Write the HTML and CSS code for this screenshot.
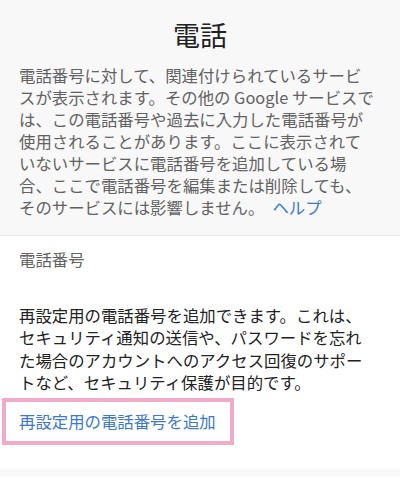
FILE: index.html
```html
<!DOCTYPE html>
<html lang="ja">
<head>
<meta charset="utf-8">
<link rel="stylesheet" href="styles.css">
</head>
<body>
<section class="intro">
  <h1 class="title">電話</h1>
  <p class="desc">電話番号に対して、関連付けられているサービスが表示されます。その他の Google サービスでは、この電話番号や過去に入力した電話番号が使用されることがあります。ここに表示されていないサービスに電話番号を追加している場合、ここで電話番号を編集または削除しても、そのサービスには影響しません。<a class="link" href="#">ヘルプ</a></p>
</section>
<section class="phone">
  <div class="label">電話番号</div>
  <p class="body">再設定用の電話番号を追加できます。これは、セキュリティ通知の送信や、パスワードを忘れた場合のアカウントへのアクセス回復のサポートなど、セキュリティ保護が目的です。</p>
  <a class="add" href="#">再設定用の電話番号を追加</a>
</section>
<div class="footer"></div>
</body>
</html>
```
FILE: styles.css
```css
html, body {
  margin: 0;
  padding: 0;
  background: #ffffff;
}
body {
  font-family: "Noto Sans CJK JP", "Noto Sans", sans-serif;
  width: 400px;
  height: 478px;
  overflow: hidden;
  text-spacing-trim: space-all;
}
.intro {
  background: #f8f8f8;
  border-bottom: 1px solid #ececec;
  padding: 17px 26px 17px 19px;
  height: 201px;
}
.title {
  margin: 0 -7px 0 0;
  font-size: 27px;
  font-weight: 400;
  line-height: 36px;
  text-align: center;
  color: #212121;
}
.desc {
  margin: 11px 0 0 0;
  font-size: 16.4px;
  line-height: 22px;
  color: #626262;
}
.link {
  display: inline-block;
  margin-left: 8px;
  line-height: 22px;
  color: #3b78d4;
  text-decoration: none;
}
.phone {
  padding: 12px 26px 0 19px;
  height: 221px;
  display: flex;
  flex-direction: column;
  align-items: flex-start;
}
.label {
  font-size: 16.4px;
  line-height: 22px;
  color: #636363;
}
.body {
  margin: 34px 0 0 0;
  font-size: 16.4px;
  line-height: 22.3px;
  color: #222222;
}
.add {
  margin: 5px 0 0 -17px;
  border: 4px solid #f3aac9;
  padding: 0 14px 0 13px;
  line-height: 39px;
  font-size: 16.4px;
  color: #3b78d4;
  text-decoration: none;
}
.footer {
  background: #f8f8f8;
  height: 8px;
}
```
